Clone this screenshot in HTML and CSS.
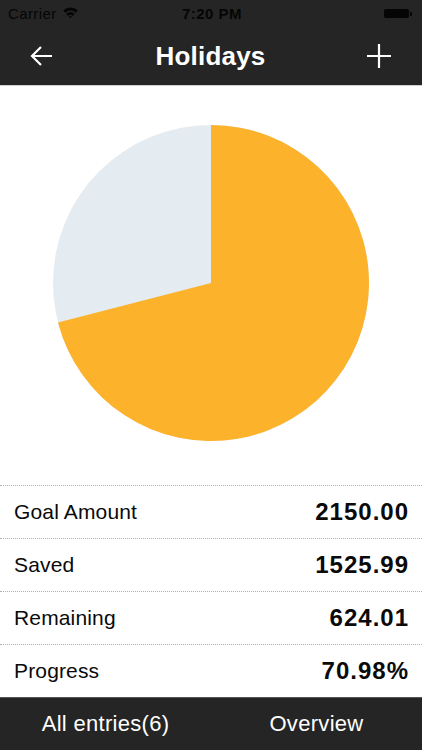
FILE: index.html
```html
<!DOCTYPE html>
<html>
<head>
<meta charset="utf-8">
<link rel="stylesheet" href="styles.css">
</head>
<body>
<div class="app">
  <header class="top">
    <div class="status">
      <div class="status-left">
        <span class="carrier">Carrier</span>
        <svg class="wifi" width="15" height="11" viewBox="0 0 15 11">
          <path d="M7.5 11 L0.2 3.6 A10.4 10.4 0 0 1 14.8 3.6 Z" fill="#050505"/>
          <path d="M7.5 11 L2.3 5.7 A7.4 7.4 0 0 1 12.7 5.7 Z" fill="#252525"/>
          <path d="M7.5 11 L3.4 6.8 A5.8 5.8 0 0 1 11.6 6.8 Z" fill="#050505"/>
          <path d="M7.5 11 L5.4 8.8 A3 3 0 0 1 9.6 8.8 Z" fill="#252525"/>
          <path d="M7.5 11 L6.2 9.6 A1.9 1.9 0 0 1 8.8 9.6 Z" fill="#050505"/>
        </svg>
      </div>
      <div class="time">7:20 PM</div>
      <div class="status-right">
        <div class="battery"><span class="battery-body"></span><span class="battery-nub"></span></div>
      </div>
    </div>
    <nav class="nav">
      <svg class="nav-icon" width="26" height="26" viewBox="0 0 26 26">
        <path d="M23 13 H3 M12 4 L3 13 L12 22" fill="none" stroke="#fff" stroke-width="2.2" stroke-linecap="butt" stroke-linejoin="miter"/>
      </svg>
      <h1 class="title">Holidays</h1>
      <svg class="nav-icon" width="26" height="26" viewBox="0 0 26 26">
        <path d="M13 1 V25 M1 13 H25" fill="none" stroke="#fff" stroke-width="2.2"/>
      </svg>
    </nav>
  </header>

  <section class="chart">
    <svg class="pie" width="316" height="316" viewBox="0 0 316 316">
      <circle cx="158" cy="158" r="158" fill="#E4EBF1"/>
      <path d="M158 158 L158 0 A158 158 0 1 1 5.0 197.5 Z" fill="#FCB22A"/>
    </svg>
  </section>

  <section class="rows">
    <div class="row"><span class="label">Goal Amount</span><span class="value">2150.00</span></div>
    <div class="row"><span class="label">Saved</span><span class="value">1525.99</span></div>
    <div class="row"><span class="label">Remaining</span><span class="value">624.01</span></div>
    <div class="row"><span class="label">Progress</span><span class="value">70.98%</span></div>
  </section>

  <footer class="tabs">
    <div class="tab">All entries(6)</div>
    <div class="tab">Overview</div>
  </footer>
</div>
</body>
</html>
```

FILE: styles.css
```css
html, body {
  margin: 0;
  padding: 0;
  background: #ffffff;
}
body {
  font-family: "Liberation Sans", Arial, sans-serif;
  width: 422px;
  height: 750px;
  overflow: hidden;
}
.app {
  display: flex;
  flex-direction: column;
  height: 750px;
}
.top {
  background: #252525;
  height: 85px;
  border-bottom: 1px solid #cfcfcf;
  display: flex;
  flex-direction: column;
}
.status {
  height: 27px;
  display: grid;
  grid-template-columns: 1fr auto 1fr;
  align-items: center;
  padding: 0 10px 0 8px;
  color: #050505;
  font-size: 15px;
}
.status-left {
  display: flex;
  align-items: center;
  gap: 6px;
}
.carrier {
  letter-spacing: 0.4px;
}
.wifi {
  margin-top: -2px;
}
.time {
  font-weight: bold;
  letter-spacing: 0.5px;
  font-size: 15px;
  margin-left: 4px;
}
.status-right {
  display: flex;
  justify-content: flex-end;
}
.battery {
  display: flex;
  align-items: center;
}
.battery-body {
  width: 25px;
  height: 9px;
  background: #050505;
  border-radius: 2px;
}
.battery-nub {
  width: 2px;
  height: 4px;
  background: #050505;
  margin-left: 1px;
  border-radius: 0 1px 1px 0;
}
.nav {
  flex: 1;
  display: flex;
  align-items: center;
  justify-content: space-between;
  padding: 0 30px 0 29px;
}
.title {
  margin: 0;
  color: #ffffff;
  font-size: 26px;
  font-weight: bold;
  letter-spacing: 0.2px;
}
.chart {
  height: 399px;
  display: flex;
  justify-content: center;
  align-items: flex-start;
  padding-top: 39px;
  box-sizing: border-box;
}
.rows {
  display: flex;
  flex-direction: column;
}
.row {
  box-sizing: border-box;
  height: 53px;
  border-top: 1px dotted #b0b0b0;
  display: flex;
  align-items: center;
  justify-content: space-between;
  padding: 0 14px 0 14px;
}
.label {
  font-size: 21px;
  color: #0a0a0a;
  letter-spacing: 0.15px;
}
.value {
  font-size: 24px;
  font-weight: bold;
  color: #0a0a0a;
  letter-spacing: 1px;
  margin-right: -1px;
}
.tabs {
  height: 53px;
  background: #252525;
  border-top: 1px solid #555;
  box-sizing: border-box;
  display: grid;
  grid-template-columns: 1fr 1fr;
  align-items: center;
}
.tab {
  text-align: center;
  color: #ffffff;
  font-size: 22px;
  letter-spacing: 0.3px;
}
```
